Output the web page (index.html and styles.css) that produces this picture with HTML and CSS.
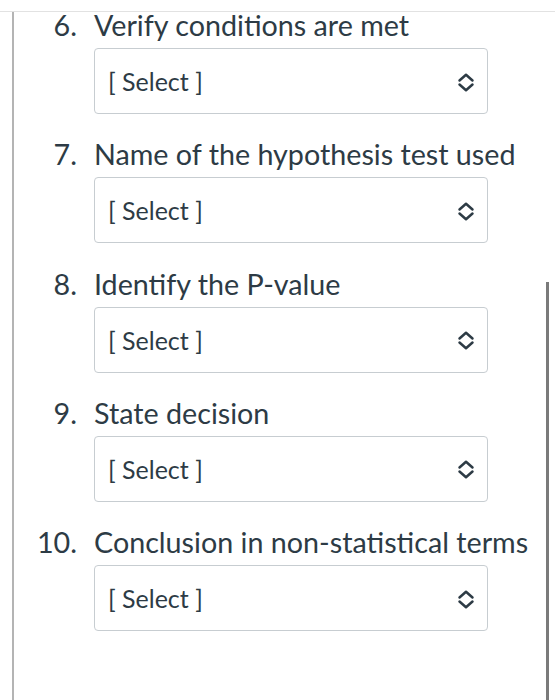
FILE: index.html
```html
<!DOCTYPE html>
<html>
<head>
<meta charset="utf-8">
<link rel="stylesheet" href="styles.css">
</head>
<body>
<div class="topline"></div>
<div class="page">
  <div class="questions">
    <div class="q">
      <div class="num">6.</div>
      <div class="label">Verify conditions are met</div>
      <div class="select"><span>[ Select ]</span><svg class="chev" width="18" height="19" viewBox="0 0 18 19"><path d="M2.5 7.5 L9 1.8 L15.5 7.5 M2.5 11.5 L9 17.2 L15.5 11.5" fill="none" stroke="#2d3b45" stroke-width="2.5" stroke-linecap="round" stroke-linejoin="round"/></svg></div>
    </div>
    <div class="q">
      <div class="num">7.</div>
      <div class="label">Name of the hypothesis test used</div>
      <div class="select"><span>[ Select ]</span><svg class="chev" width="18" height="19" viewBox="0 0 18 19"><path d="M2.5 7.5 L9 1.8 L15.5 7.5 M2.5 11.5 L9 17.2 L15.5 11.5" fill="none" stroke="#2d3b45" stroke-width="2.5" stroke-linecap="round" stroke-linejoin="round"/></svg></div>
    </div>
    <div class="q">
      <div class="num">8.</div>
      <div class="label">Identify the P-value</div>
      <div class="select"><span>[ Select ]</span><svg class="chev" width="18" height="19" viewBox="0 0 18 19"><path d="M2.5 7.5 L9 1.8 L15.5 7.5 M2.5 11.5 L9 17.2 L15.5 11.5" fill="none" stroke="#2d3b45" stroke-width="2.5" stroke-linecap="round" stroke-linejoin="round"/></svg></div>
    </div>
    <div class="q">
      <div class="num">9.</div>
      <div class="label">State decision</div>
      <div class="select"><span>[ Select ]</span><svg class="chev" width="18" height="19" viewBox="0 0 18 19"><path d="M2.5 7.5 L9 1.8 L15.5 7.5 M2.5 11.5 L9 17.2 L15.5 11.5" fill="none" stroke="#2d3b45" stroke-width="2.5" stroke-linecap="round" stroke-linejoin="round"/></svg></div>
    </div>
    <div class="q">
      <div class="num">10.</div>
      <div class="label">Conclusion in non-statistical terms</div>
      <div class="select"><span>[ Select ]</span><svg class="chev" width="18" height="19" viewBox="0 0 18 19"><path d="M2.5 7.5 L9 1.8 L15.5 7.5 M2.5 11.5 L9 17.2 L15.5 11.5" fill="none" stroke="#2d3b45" stroke-width="2.5" stroke-linecap="round" stroke-linejoin="round"/></svg></div>
    </div>
  </div>
</div>
<div class="scrollbar"></div>
</body>
</html>
```
FILE: styles.css
```css
html, body {
  margin: 0;
  padding: 0;
  background: #ffffff;
  height: 100%;
  overflow: hidden;
}
body {
  font-family: Lato, "Liberation Sans", sans-serif;
  color: #2d3b45;
  position: relative;
}
.topline {
  height: 11px;
  border-bottom: 1px solid #e2e2e2;
}
.page {
  margin-left: 12px;
  border-left: 2px solid #b4b4b4;
  height: 688px;
}
.q {
  display: grid;
  grid-template-columns: 63px 394px;
  column-gap: 17px;
  font-size: 28.7px;
  line-height: 26px;
  margin-bottom: 27.25px;
}
.num {
  text-align: right;
  grid-row: 1;
  grid-column: 1;
}
.label {
  grid-row: 1;
  grid-column: 2;
  white-space: nowrap;
}
.select {
  grid-row: 2;
  grid-column: 2;
  margin-top: 10px;
  height: 64px;
  border: 1px solid #c7cdd1;
  border-radius: 4px;
  display: flex;
  align-items: center;
  justify-content: space-between;
  padding: 0 12px 0 13px;
  font-size: 25px;
  line-height: 30px;
}
.chev {
  display: block;
  margin-top: 2px;
}
.scrollbar {
  position: absolute;
  left: 546px;
  top: 282px;
  width: 3px;
  height: 418px;
  background: #7a7a7a;
}
```
